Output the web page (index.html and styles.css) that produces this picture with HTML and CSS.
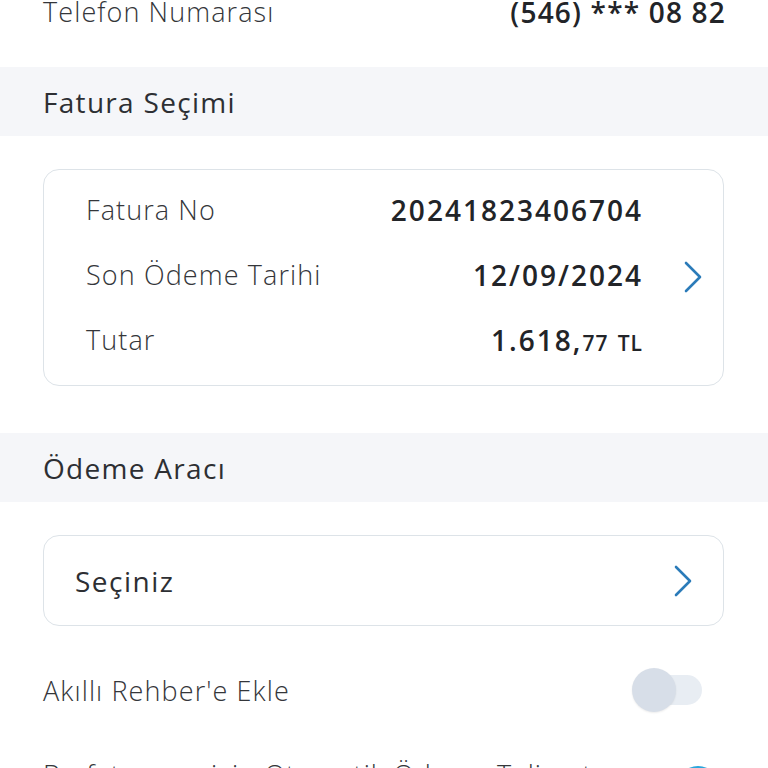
FILE: index.html
```
<!DOCTYPE html>
<html lang="tr">
<head>
  <meta charset="UTF-8">
  <meta name="viewport" content="width=device-width, initial-scale=1">
  <title>Fatura Ödeme</title>
  <link rel="stylesheet" href="styles.css">
</head>
<body>

<div class="page">
  <div class="info-row">
    <span class="label">Telefon Numarası</span>
    <span class="value">(546) *** 08 82</span>
  </div>

  <div class="section-title">Fatura Seçimi</div>

  <div class="card bill-card">
    <div class="bill-rows">
      <div class="bill-row">
        <span class="label">Fatura No</span>
        <span class="value">20241823406704</span>
      </div>
      <div class="bill-row">
        <span class="label">Son Ödeme Tarihi</span>
        <span class="value">12/09/2024</span>
      </div>
      <div class="bill-row">
        <span class="label">Tutar</span>
        <span class="value">1.618,<small>77</small> <small>TL</small></span>
      </div>
    </div>
    <svg class="chevron" width="20" height="34" viewBox="0 0 20 34"><path d="M3 3 L17 17 L3 31" fill="none" stroke="#2b7bb9" stroke-width="2.6" stroke-linecap="round" stroke-linejoin="round"/></svg>
  </div>

  <div class="section-title">Ödeme Aracı</div>

  <div class="card select-card">
    <span class="select-text">Seçiniz</span>
    <svg class="chevron" width="20" height="34" viewBox="0 0 20 34"><path d="M3 3 L17 17 L3 31" fill="none" stroke="#2b7bb9" stroke-width="2.6" stroke-linecap="round" stroke-linejoin="round"/></svg>
  </div>

  <div class="switch-row">
    <span class="label">Akıllı Rehber'e Ekle</span>
    <span class="toggle"><span class="knob"></span></span>
  </div>

  <div class="switch-row">
    <span class="label">Bu faturanız için Otomatik Ödeme Talimatı</span>
    <span class="toggle on"><span class="knob"></span></span>
  </div>
</div>

</body>
</html>
```

FILE: styles.css
```
body {
  margin: 0;
  padding: 0;
  background: #fff;
  font-family: "Open Sans", "Noto Sans", sans-serif;
  color: #2d2f33;
  overflow: hidden;
}
.page {
  margin-top: -6px;
}
.label {
  font-size: 27px;
  font-weight: 300;
  letter-spacing: 1.1px;
  color: #34363a;
}
.value {
  font-size: 28px;
  font-weight: 600;
  letter-spacing: 2px;
  margin-right: -2px;
  color: #222428;
}
.value small {
  font-size: 21px;
  letter-spacing: 1px;
}
.info-row {
  display: flex;
  justify-content: space-between;
  align-items: flex-start;
  height: 73px;
  padding: 0 44px 0 43px;
  line-height: 36px;
}
.info-row .value {
  letter-spacing: 1.2px;
  margin-right: -2px;
}
.section-title {
  background: #f5f6f9;
  height: 69px;
  display: flex;
  align-items: center;
  padding-left: 43px;
  font-size: 28px;
  letter-spacing: 1.3px;
  color: #2d2f33;
}
.card {
  margin: 33px 44px 47px 43px;
  border: 1.5px solid #dde3e8;
  border-radius: 16px;
  display: flex;
  align-items: center;
}
.bill-card {
  padding: 7px 20px 13px 42px;
}
.bill-rows {
  flex: 1;
}
.bill-row {
  height: 65px;
  display: flex;
  justify-content: space-between;
  align-items: center;
}
.bill-card .chevron {
  margin-left: 42px;
  margin-top: 4px;
}
.select-card {
  margin-top: 33px;
  margin-bottom: 0;
  height: 89px;
  padding: 0 30px 0 31px;
  justify-content: space-between;
}
.select-text {
  font-size: 28px;
  letter-spacing: 1.5px;
  color: #2d2f33;
}
.switch-row {
  display: flex;
  justify-content: space-between;
  align-items: center;
  height: 70px;
  padding: 0 66px 0 43px;
  margin-top: 29px;
}
.switch-row + .switch-row {
  margin-top: 14px;
}
.toggle {
  position: relative;
  width: 52px;
  height: 30px;
  border-radius: 15px;
  background: #e8edf3;
}
.knob {
  position: absolute;
  left: -18px;
  top: -7px;
  width: 44px;
  height: 44px;
  border-radius: 50%;
  background: #d7dee8;
  box-shadow: 0 1px 2px rgba(0,0,0,0.08);
}
.toggle.on {
  margin-top: 28px;
  background: #bfe3f3;
}
.toggle.on .knob {
  left: 26px;
  background: #2aa6dc;
}
```
